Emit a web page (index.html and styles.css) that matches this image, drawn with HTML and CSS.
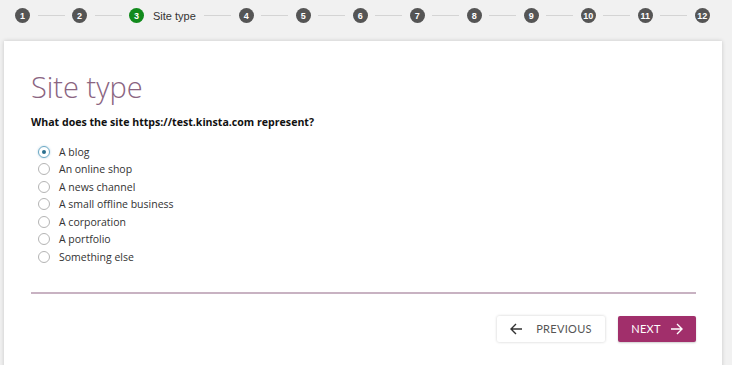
FILE: index.html
```html
<!DOCTYPE html>
<html lang="en">
<head>
    <meta charset="UTF-8">
    <meta name="viewport" content="width=device-width, initial-scale=1.0">
    <title>Site type</title>
    <link rel="stylesheet" href="styles.css">
</head>
<body>

    <!-- Steps -->
    <div class="steps">
        <span class="step">1</span><span class="step-line"></span>
        <span class="step">2</span><span class="step-line"></span>
        <span class="step active">3</span><span class="step-label">Site type</span><span class="step-line"></span>
        <span class="step">4</span><span class="step-line"></span>
        <span class="step">5</span><span class="step-line"></span>
        <span class="step">6</span><span class="step-line"></span>
        <span class="step">7</span><span class="step-line"></span>
        <span class="step">8</span><span class="step-line"></span>
        <span class="step">9</span><span class="step-line"></span>
        <span class="step">10</span><span class="step-line"></span>
        <span class="step">11</span><span class="step-line"></span>
        <span class="step">12</span>
    </div>

    <!-- Card -->
    <div class="card">
        <h1>Site type</h1>
        <p class="question">What does the site https://test.kinsta.com represent?</p>

        <div class="options">
            <label class="option"><span class="radio checked"></span>A blog</label>
            <label class="option"><span class="radio"></span>An online shop</label>
            <label class="option"><span class="radio"></span>A news channel</label>
            <label class="option"><span class="radio"></span>A small offline business</label>
            <label class="option"><span class="radio"></span>A corporation</label>
            <label class="option"><span class="radio"></span>A portfolio</label>
            <label class="option"><span class="radio"></span>Something else</label>
        </div>

        <hr class="divider">

        <div class="actions">
            <button class="btn btn-prev">
                <svg width="13" height="12" viewBox="0 0 13 12"><path d="M12 6H1.5M6 1L1 6l5 5" fill="none" stroke="#333" stroke-width="1.4"/></svg>
                PREVIOUS
            </button>
            <button class="btn btn-next">
                NEXT
                <svg width="13" height="12" viewBox="0 0 13 12"><path d="M1 6h10.5M7 1l5 5-5 5" fill="none" stroke="#fff" stroke-width="1.4"/></svg>
            </button>
        </div>
    </div>

</body>
</html>
```

FILE: styles.css
```css
* {
    box-sizing: border-box;
    margin: 0;
    padding: 0;
}

body {
    background: #f1f1f1;
    font-family: 'Open Sans', sans-serif;
    color: #333;
    overflow: hidden;
}

/* Steps */
.steps {
    display: flex;
    align-items: center;
    height: 31px;
    padding-left: 15px;
}

.step {
    width: 15px;
    height: 15px;
    border-radius: 50%;
    background: #555;
    color: #fff;
    font-family: 'Liberation Sans', Arial, sans-serif;
    font-size: 9px;
    font-weight: bold;
    display: flex;
    align-items: center;
    justify-content: center;
    flex-shrink: 0;
}

.step.active {
    background: #118a1c;
}

.step-line {
    width: 27px;
    height: 1px;
    background: #d4d4d4;
    margin: 0 7.5px;
}

.step-label {
    font-family: 'Liberation Sans', Arial, sans-serif;
    font-size: 11px;
    color: #333;
    margin-left: 9px;
    margin-right: 1px;
}

/* Card */
.card {
    background: #fff;
    margin: 10px 10px 0 4px;
    padding: 28px 26px 40px 27px;
    height: 340px;
    box-shadow: 0 0 4px rgba(0, 0, 0, 0.18);
}

h1 {
    font-weight: 300;
    font-size: 29px;
    line-height: 36px;
    color: #8a6481;
}

.question {
    font-size: 10.6px;
    font-weight: bold;
    color: #111;
    margin-top: 10px;
}

.options {
    margin-top: 14px;
    padding-left: 7px;
}

.option {
    display: flex;
    align-items: center;
    height: 17.5px;
    font-size: 10.5px;
    color: #333;
}

.radio {
    width: 12px;
    height: 12px;
    border: 1px solid #b4b4b4;
    border-radius: 50%;
    margin-right: 9px;
    display: flex;
    align-items: center;
    justify-content: center;
}

.radio.checked {
    border-color: #6aa8c4;
    box-shadow: 0 0 2px rgba(80, 150, 190, 0.5);
}

.radio.checked::after {
    content: "";
    width: 4px;
    height: 4px;
    border-radius: 50%;
    background: #2b6f8e;
}

.divider {
    border: none;
    height: 2px;
    background: #c8b2c2;
    margin-top: 26px;
}

/* Buttons */
.actions {
    display: flex;
    justify-content: flex-end;
    gap: 13px;
    margin-top: 22px;
}

.btn {
    height: 26px;
    display: flex;
    align-items: center;
    justify-content: center;
    font-family: 'Lato', sans-serif;
    font-size: 11px;
    letter-spacing: 0.3px;
    border: none;
    border-radius: 2px;
}

.btn-prev {
    width: 108px;
    gap: 13px;
    background: #fff;
    color: #555;
    box-shadow: 0 0 3px rgba(0, 0, 0, 0.2);
}

.btn-next {
    width: 78px;
    gap: 9px;
    background: #a12f6b;
    color: #fff;
    box-shadow: 0 1px 2px rgba(0, 0, 0, 0.2);
}
```
